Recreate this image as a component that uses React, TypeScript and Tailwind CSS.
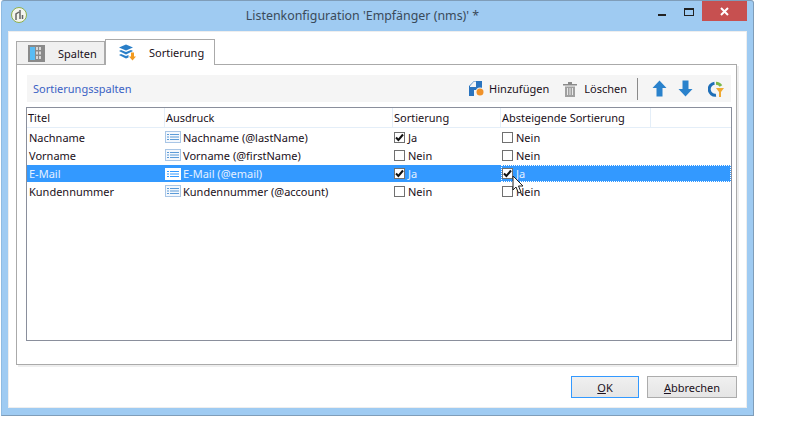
import type { ReactNode } from "react";

const columns = "grid grid-cols-[138px_228px_108px_1fr]";

type Row = {
  title: string;
  expr: string;
  sort: boolean;
  desc: boolean;
  selected?: boolean;
};

const rows: Row[] = [
  { title: "Nachname", expr: "Nachname (@lastName)", sort: true, desc: false },
  { title: "Vorname", expr: "Vorname (@firstName)", sort: false, desc: false },
  { title: "E-Mail", expr: "E-Mail (@email)", sort: true, desc: true, selected: true },
  { title: "Kundennummer", expr: "Kundennummer (@account)", sort: false, desc: false },
];

function Check({ checked }: { checked: boolean }) {
  return (
    <span className="flex h-[11px] w-[11px] shrink-0 items-center justify-center border border-[#707070] bg-white">
      {checked && (
        <svg width="9" height="9" viewBox="0 0 9 9">
          <path d="M1 4.5 3.4 7 8 1.5" fill="none" stroke="#111" strokeWidth="2" />
        </svg>
      )}
    </span>
  );
}

function ExprIcon({ selected }: { selected?: boolean }) {
  const line = selected ? "#3399ff" : "#5b9bd8";
  return (
    <svg width="16" height="12" viewBox="0 0 16 12" className="shrink-0">
      <rect x="0.5" y="0.5" width="15" height="11" fill={selected ? "#fff" : "#f4f8fd"} stroke={selected ? "#fff" : "#a9c6e6"} />
      <path d="M2 3.5h2M5 3.5h9M2 6h2M5 6h9M2 8.5h2M5 8.5h9" stroke={line} />
    </svg>
  );
}

function BoolCell({ value, selected, focus }: { value: boolean; selected?: boolean; focus?: boolean }) {
  return (
    <div className={`flex h-full items-center gap-[3px] ${focus ? "border border-dotted border-white" : "pl-px"}`}>
      <Check checked={value} />
      <span className={selected ? "text-[#e4f0ff]" : ""}>{value ? "Ja" : "Nein"}</span>
    </div>
  );
}

function ToolButton({ icon, label, gap }: { icon: ReactNode; label: string; gap: string }) {
  return (
    <div className={`flex items-center ${gap}`}>
      {icon}
      <span>{label}</span>
    </div>
  );
}

function ArrowIcon({ down }: { down?: boolean }) {
  return (
    <svg width="15" height="17" viewBox="0 0 15 17" className={down ? "rotate-180" : ""}>
      <path d="M7.5 0.5 14.5 8H10.5V16.5H4.5V8H0.5Z" fill="#2a82cc" />
    </svg>
  );
}

export default function App() {
  return (
    <div className="h-[445px] w-[786px] overflow-hidden bg-white text-[11px] leading-none text-[#1a1020] [font-family:'Noto_Sans',sans-serif]">
      <div className="ml-px flex h-[416px] w-[753px] flex-col rounded-t-[3px] border border-[#7f9db9] border-l-[#8fbbe2] bg-[#9fcbf2]">
        {/* title bar */}
        <div className="flex h-[30px] shrink-0 items-start">
          <div className="ml-[9px] mt-[6px] flex h-[16px] w-[16px] items-center justify-center rounded-full border border-[#8fb04a] bg-[#f4f4ee]">
            <svg width="10" height="12" viewBox="0 0 10 12">
              <path d="M2 11V5l3-2M6 1v9M8.5 6v4" fill="none" stroke="#666" strokeWidth="1.5" />
            </svg>
          </div>
          <div className="flex-1 pl-[40px] pt-[9px] text-center text-[12.4px] text-[#3a4a5a]">
            Listenkonfiguration 'Empfänger (nms)' *
          </div>
          <div className="mr-[6px] flex items-start">
            <div className="mt-[13px] h-[2px] w-[8px] bg-[#222]" />
            <div className="ml-[18px] mt-[7px] h-[8px] w-[10px] border border-t-2 border-[#222]" />
            <div className="ml-[8px] flex h-[20px] w-[45px] items-center justify-center bg-[#c75050]">
              <svg width="9" height="9" viewBox="0 0 9 9">
                <path d="M1 1 8 8M8 1 1 8" stroke="#fff" strokeWidth="2" />
              </svg>
            </div>
          </div>
        </div>

        {/* client area */}
        <div className="mx-[6px] flex flex-1 flex-col border border-[#eeeeee] bg-white px-[7px] pt-[7px]">
          <div className="flex h-[25px] items-end">
            <div className="flex h-[23px] w-[89px] items-center gap-[13px] border border-b-0 border-[#aaaaaa] bg-[#f0f0f0] pl-[11px]">
              <svg width="17" height="17" viewBox="0 0 17 17">
                <rect width="17" height="17" fill="#8a8a8a" />
                <rect x="2" y="2" width="5" height="13" fill="#58bcf4" />
                <path d="M8 2h2v3H8zM11 2h2v3h-2zM8 6.5h2v3H8zM11 6.5h2v3h-2zM8 11h2v3H8zM11 11h2v3h-2z" fill="#d8d8d8" />
              </svg>
              <span>Spalten</span>
            </div>
            <div className="relative z-10 -mb-px flex h-[26px] w-[110px] items-center gap-[13px] border border-b-0 border-[#aaaaaa] bg-white pl-[13px]">
              <svg width="17" height="17" viewBox="0 0 17 17">
                <path d="M0 3.5 7 0.5 14 3.5 7 6.5Z" fill="#2a7fc8" />
                <path d="M0 7 2 6 7 8 12 6 14 7 7 10.5Z" fill="#2a7fc8" />
                <path d="M0 11 2 10 7 12 9.5 11V13.5L7 14.5Z" fill="#2a7fc8" />
                <path d="M12 8.5h3v4h2l-3.5 4-3.5-4h2Z" fill="#f29a1f" />
              </svg>
              <span>Sortierung</span>
            </div>
          </div>

          <div className="w-[721px] border border-[#aaaaaa] px-[10px] pt-[10px] shadow-[2px_2px_0_#eeeeee]">
            <div className="flex h-[27px] w-[704px] items-center bg-[#f5f5f5] pr-[7px]">
              <span className="pl-[6px] text-[#3b62c4]">Sortierungsspalten</span>
              <div className="ml-auto flex items-center">
                <ToolButton
                  label="Hinzufügen"
                  gap="gap-[4px]"
                  icon={
                    <svg width="16" height="17" viewBox="0 0 16 17">
                      <path d="M0 6 5 1H13V10H5V16H0Z" fill="#2a74bf" />
                      <path d="M5 1.5H7V7H1V6Z" fill="#f5f5f5" />
                      <path d="M1 7.5H5V8.5H1Z" fill="#2a74bf" />
                      <circle cx="11" cy="12" r="4.5" fill="#f5f5f5" />
                      <circle cx="11" cy="12" r="3.5" fill="#f0922a" />
                    </svg>
                  }
                />
                <div className="ml-[14px]">
                  <ToolButton
                    label="Löschen"
                    gap="gap-[7px]"
                    icon={
                      <svg width="14" height="16" viewBox="0 0 14 16">
                        <path d="M0 3h14v1.5H0ZM5 1h4v2H5Z" fill="#8a8a8a" />
                        <path d="M2 5.5h10V16H2Z" fill="#a0a0a0" />
                        <path d="M4.5 7v7M7 7v7M9.5 7v7" stroke="#e8e8e8" />
                      </svg>
                    }
                  />
                </div>
                <div className="ml-[10px] mr-[14px] h-[22px] w-px bg-[#8a8a8a]" />
                <ArrowIcon />
                <div className="ml-[11px] mr-[15px]">
                  <ArrowIcon down />
                </div>
                <svg width="16" height="16" viewBox="0 0 16 16">
                  <path d="M6.5 2.2A6 6 0 0 0 8 14.2" fill="none" stroke="#1f6fb8" strokeWidth="3" />
                  <path d="M8 2.2A6 6 0 0 1 13 5" fill="none" stroke="#7cb84a" strokeWidth="3" />
                  <path d="M8 7h8l-3 4v5h-2v-5Z" fill="#f0a830" />
                </svg>
              </div>
            </div>

            {/* grid */}
            <div className="relative -ml-px mt-[5px] h-[234px] w-[706px] border border-[#8a8f9c]">
              <div className="grid h-[20px] grid-cols-[138px_228px_108px_150px_1fr] border-b border-[#e4eef8]">
                {["Titel", "Ausdruck", "Sortierung", "Absteigende Sortierung", ""].map((h, i) => (
                  <div key={i} className={`flex items-center pl-px ${i < 4 ? "border-r border-[#e4eef8]" : ""}`}>
                    {h}
                  </div>
                ))}
              </div>
              {rows.map((row) => (
                <div
                  key={row.title}
                  className={`${columns} items-center ${row.selected ? "mt-px h-[17px] bg-[#3399ff] text-[#e4f0ff]" : "h-[18px]"}`}
                >
                  <div className="pl-[2px]">{row.title}</div>
                  <div className="flex items-center gap-[2px]">
                    <ExprIcon selected={row.selected} />
                    <span>{row.expr}</span>
                  </div>
                  <BoolCell value={row.sort} selected={row.selected} />
                  <BoolCell value={row.desc} selected={row.selected} focus={row.selected} />
                </div>
              ))}
              {/* mouse pointer */}
              <svg width="12" height="19" viewBox="0 0 12 19" className="absolute left-[485px] top-[67px]">
                <path d="M1 1V15L4 12 6.5 18 9 17 6.5 11H11Z" fill="#fff" stroke="#222" />
              </svg>
            </div>
            <div className="h-[23px]" />
          </div>

          <div className="mr-[2px] mt-[11px] flex justify-end gap-[8px]">
            <button className="h-[22px] w-[68px] border border-[#3399ff] bg-gradient-to-b from-[#f0f0f0] to-[#e5e5e5] text-[#1a1020]">
              <span className="underline">O</span>K
            </button>
            <button className="h-[22px] w-[90px] border border-[#acacac] bg-gradient-to-b from-[#f0f0f0] to-[#e5e5e5] text-[#1a1020]">
              <span className="underline">A</span>bbrechen
            </button>
          </div>
        </div>
        <div className="h-[7px] shrink-0" />
      </div>
    </div>
  );
}
